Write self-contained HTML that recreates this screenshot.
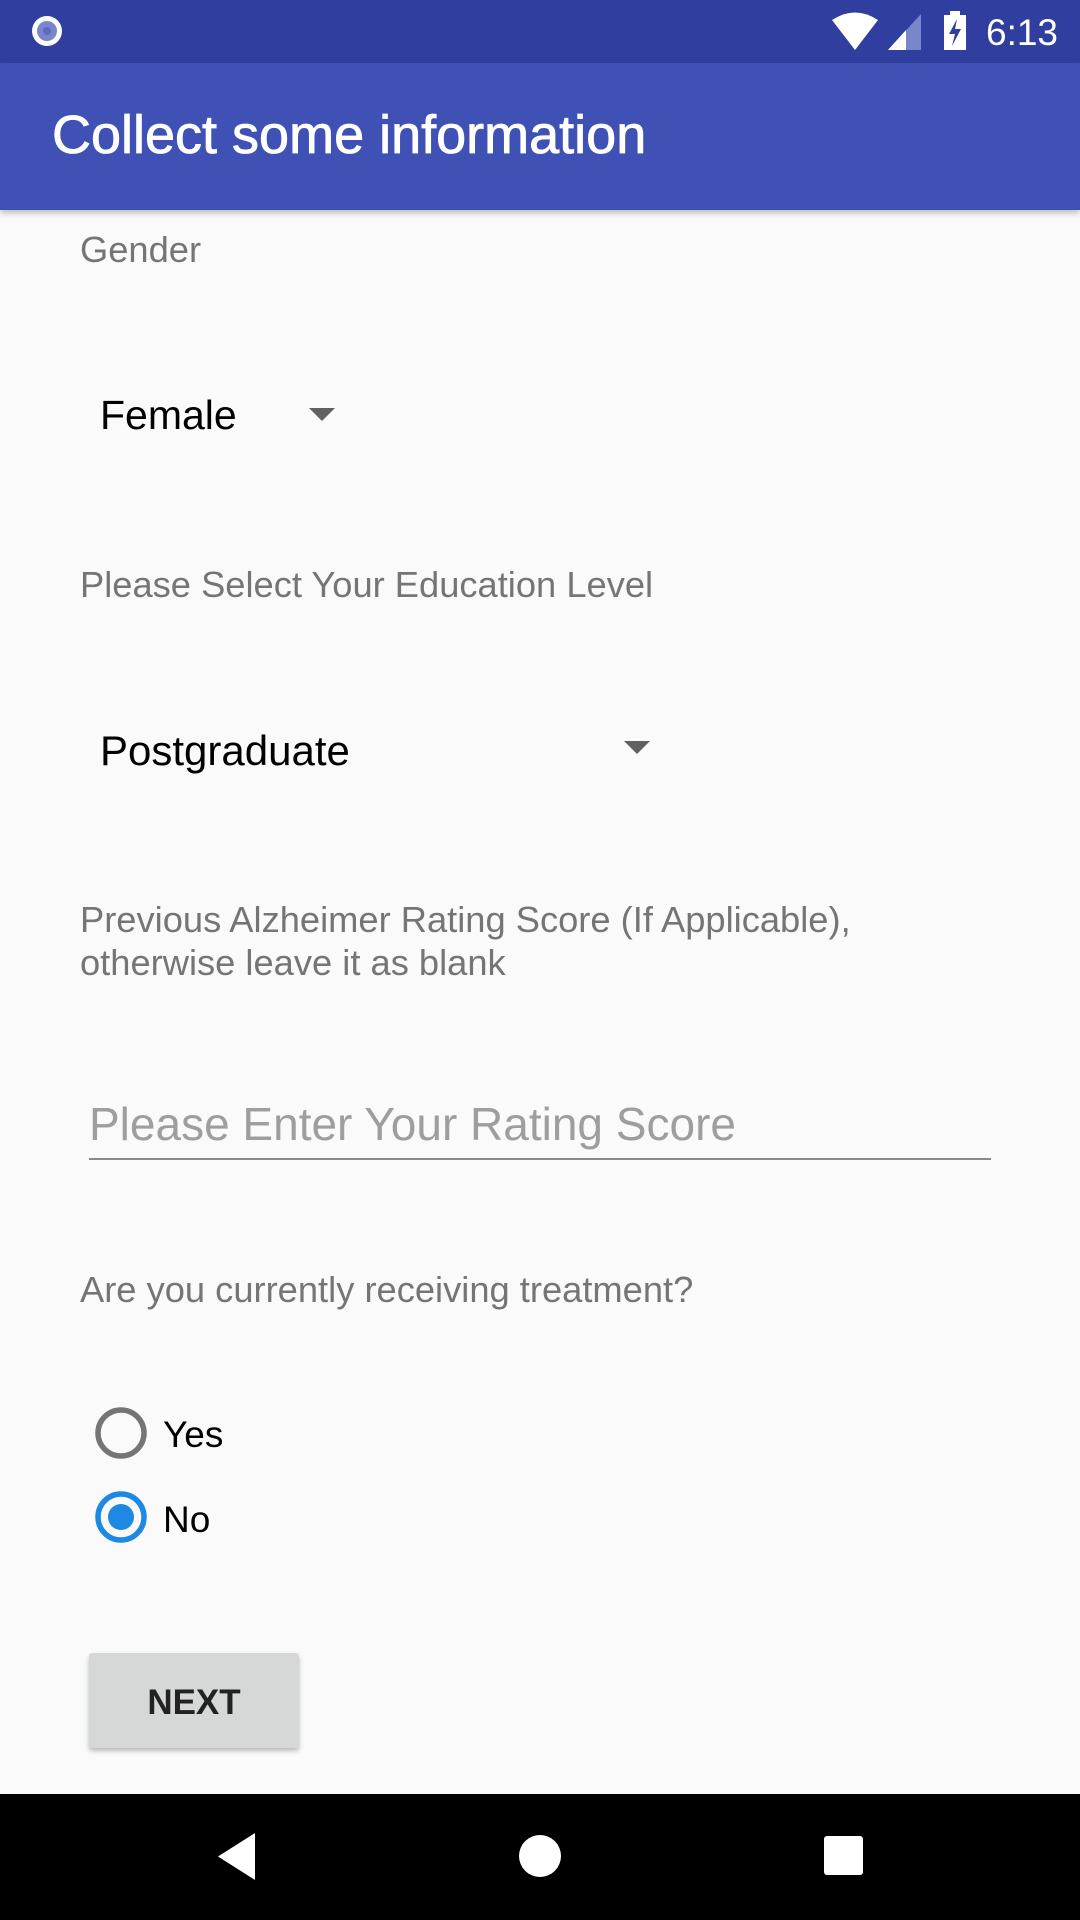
<!DOCTYPE html>
<html><head><meta charset="utf-8"><style>
body{margin:0;width:1080px;height:1920px;background:#fafafa;font-family:"Liberation Sans",sans-serif;position:relative;overflow:hidden}
.a{position:absolute;white-space:nowrap}
.lbl{color:#757575;font-size:36.3px}
</style></head><body>
<div class="a" style="left:0;top:0;width:1080px;height:63px;background:#303f9f"></div>
<svg class="a" style="left:0;top:0" width="1080" height="63">
<circle cx="47" cy="31" r="15" fill="#fff"/><circle cx="47" cy="31" r="10" fill="#7986cb"/><circle cx="47" cy="31" r="4" fill="#5c6bc0"/>
<path d="M832 20 Q855 5 878 20 L855 50 Z" fill="#fff"/>
<path d="M888 50 L921 14 L921 50 Z" fill="#7986cb"/><path d="M888 50 L906 30 L906 50 Z" fill="#fff"/>
<rect x="944" y="15" width="22" height="35" fill="#fff"/><rect x="950" y="11" width="10" height="5" fill="#fff"/>
<path d="M957 19 L949 34 L955 34 L952 46 L961 29 L955 29 Z" fill="#303f9f"/>
<text x="986" y="45" fill="#fff" font-size="37" font-family="Liberation Sans">6:13</text>
</svg>
<div class="a" style="left:0;top:63px;width:1080px;height:147px;background:#3f51b5;box-shadow:0 3px 6px rgba(0,0,0,.25)"></div>
<div class="a" style="left:52px;top:104px;color:#fff;font-size:54px;-webkit-text-stroke:0.8px #fff">Collect some information</div>
<div class="a lbl" style="left:80px;top:229px">Gender</div>
<div class="a" style="left:100px;top:392px;font-size:41px;color:#000">Female</div>
<svg class="a" style="left:309px;top:408px" width="26" height="13"><path d="M0 0H26L13 13Z" fill="#616161"/></svg>
<div class="a lbl" style="left:80px;top:564px">Please Select Your Education Level</div>
<div class="a" style="left:100px;top:727px;font-size:42px;color:#000">Postgraduate</div>
<svg class="a" style="left:624px;top:741px" width="26" height="13"><path d="M0 0H26L13 13Z" fill="#616161"/></svg>
<div class="a lbl" style="left:80px;top:898px;line-height:43px">Previous Alzheimer Rating Score (If Applicable),<br>otherwise leave it as blank</div>
<div class="a" style="left:89px;top:1097px;font-size:46px;color:#9e9e9e">Please Enter Your Rating Score</div>
<div class="a" style="left:89px;top:1158px;width:902px;height:2px;background:#8a8a8a"></div>
<div class="a lbl" style="left:80px;top:1269px">Are you currently receiving treatment?</div>
<svg class="a" style="left:90px;top:1402px" width="64" height="150">
<circle cx="31" cy="31" r="23" fill="none" stroke="#757575" stroke-width="5.5"/>
<circle cx="31" cy="115" r="23" fill="none" stroke="#1e88e5" stroke-width="5.5"/>
<circle cx="31" cy="115" r="13" fill="#1e88e5"/>
</svg>
<div class="a" style="left:163px;top:1414px;font-size:37px;color:#000">Yes</div>
<div class="a" style="left:163px;top:1499px;font-size:37px;color:#000">No</div>
<div class="a" style="left:89px;top:1653px;width:210px;height:95px;background:#d6d7d7;border-radius:3px;box-shadow:0 3px 5px rgba(0,0,0,.25);font-weight:bold;font-size:35px;color:#222;text-align:center;line-height:99px">NEXT</div>
<div class="a" style="left:0;top:1794px;width:1080px;height:126px;background:#000"></div>
<svg class="a" style="left:0;top:1794px" width="1080" height="126">
<path d="M255 39 L255 86 L218 62.5 Z" fill="#fff"/>
<circle cx="540" cy="62" r="21" fill="#fff"/>
<rect x="824" y="42" width="39" height="39" rx="3" fill="#fff"/>
</svg>
</body></html>
